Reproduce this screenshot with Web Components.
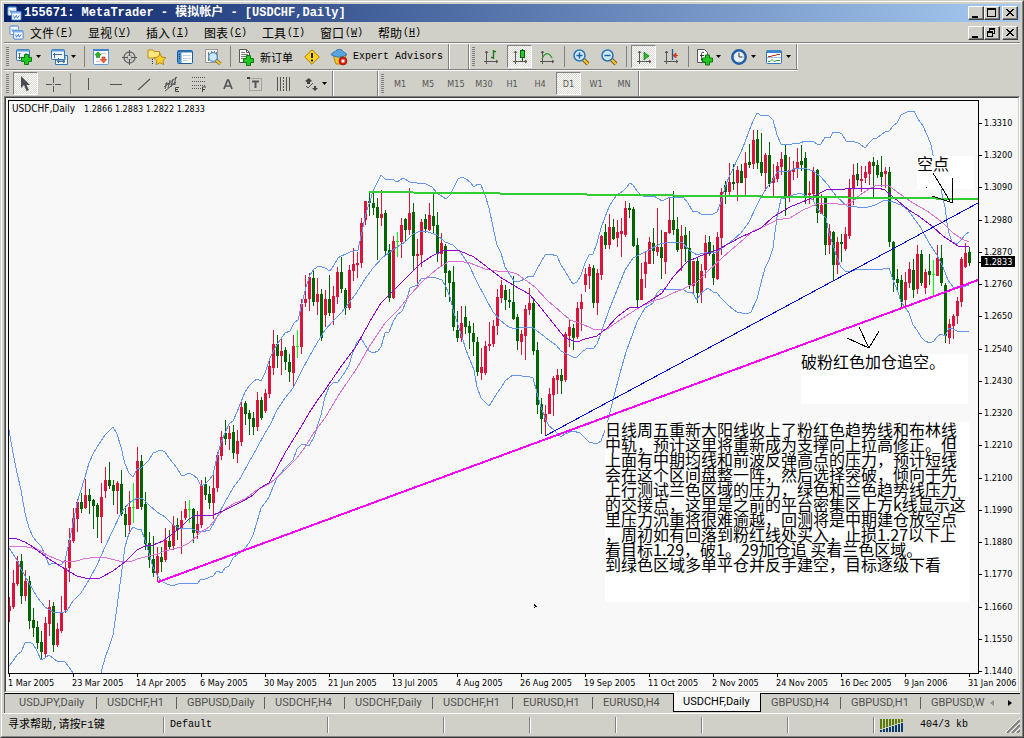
<!DOCTYPE html>
<html lang="zh-CN">
<head>
<meta charset="utf-8">
<title>MetaTrader</title>
<style>
  html, body { margin: 0; height: 100%; background: #d0d0c8; }
  body { font-family: "DejaVu Sans Condensed", "Liberation Sans", sans-serif; color: #000; }
</style>
</head>
<body>
<mt-window>
  <mt-titlebar>155671: MetaTrader - 模拟帐户 - [USDCHF,Daily]</mt-titlebar>
  <mt-menubar></mt-menubar>
  <mt-toolrow ruled>
    <mt-toolbar>
      <mt-tool icon="newchart" label="New chart" drop></mt-tool>
      <mt-tool icon="profiles" label="Profiles" drop></mt-tool>
      <mt-sep></mt-sep>
      <mt-tool icon="market" label="Market watch"></mt-tool>
      <mt-tool icon="target" label="Data window"></mt-tool>
      <mt-tool icon="navigator" label="Navigator"></mt-tool>
      <mt-tool icon="terminal" label="Terminal"></mt-tool>
      <mt-tool icon="tester" label="Strategy tester"></mt-tool>
      <mt-sep></mt-sep>
      <mt-tool icon="order" label="新订单" wide>新订单</mt-tool>
      <mt-tool icon="warn" label="MetaEditor"></mt-tool>
      <mt-tool icon="expert" label="Expert Advisors" wide latin>Expert Advisors</mt-tool>
    </mt-toolbar>
    <mt-toolbar spacer="short"></mt-toolbar>
    <mt-toolbar>
      <mt-tool icon="bars" label="Bar chart"></mt-tool>
      <mt-tool icon="candles" label="Candlesticks" pressed></mt-tool>
      <mt-tool icon="line" label="Line chart"></mt-tool>
      <mt-sep></mt-sep>
      <mt-tool icon="zoomin" label="Zoom in"></mt-tool>
      <mt-tool icon="zoomout" label="Zoom out"></mt-tool>
      <mt-sep></mt-sep>
      <mt-tool icon="scroll" label="Auto scroll" pressed></mt-tool>
      <mt-tool icon="shift" label="Chart shift"></mt-tool>
      <mt-sep></mt-sep>
      <mt-tool icon="indicator" label="Indicators" drop></mt-tool>
      <mt-tool icon="clock" label="Periods" drop></mt-tool>
      <mt-tool icon="template" label="Templates" drop></mt-tool>
    </mt-toolbar>
  </mt-toolrow>
  <mt-toolrow>
    <mt-toolbar>
      <mt-tool icon="cursor" label="Cursor" pressed></mt-tool>
      <mt-tool icon="cross" label="Crosshair"></mt-tool>
      <mt-sep></mt-sep>
      <mt-tool icon="vline" label="Vertical line"></mt-tool>
      <mt-tool icon="hline" label="Horizontal line"></mt-tool>
      <mt-tool icon="trend" label="Trendline"></mt-tool>
      <mt-tool icon="channel" label="Channel"></mt-tool>
      <mt-tool icon="fibo" label="Fibonacci"></mt-tool>
      <mt-tool icon="text" label="Text"></mt-tool>
      <mt-tool icon="label" label="Text label"></mt-tool>
      <mt-tool icon="cycles" label="Cycle lines"></mt-tool>
      <mt-tool icon="arrows" label="Arrows" drop></mt-tool>
    </mt-toolbar>
    <mt-toolbar spacer="long"></mt-toolbar>
    <mt-toolbar>
      <mt-tool label="M1">M1</mt-tool><mt-tool label="M5">M5</mt-tool><mt-tool label="M15">M15</mt-tool>
      <mt-tool label="M30">M30</mt-tool><mt-tool label="H1">H1</mt-tool><mt-tool label="H4">H4</mt-tool>
      <mt-tool label="D1" pressed>D1</mt-tool><mt-tool label="W1">W1</mt-tool><mt-tool label="MN">MN</mt-tool>
    </mt-toolbar>
  </mt-toolrow>
  <mt-chart></mt-chart>
  <mt-tabs></mt-tabs>
  <mt-status></mt-status>
</mt-window>

<script>
const define = (name, css, html, setup) => customElements.define(name, class extends HTMLElement {
  connectedCallback() {
    if (this.shadowRoot) return;
    const root = this.attachShadow({ mode: 'open' });
    root.innerHTML = `<style>:host,*{box-sizing:border-box}${css}</style>${typeof html === 'function' ? html(this) : html}`;
    if (setup) setup(root, this);
  }
});

/* ---------- icons (16 x 16) ---------- */
const plus = (x, y) => `<path d="M${x + 3} ${y}h4v3h3v4h-3v3h-4v-3h-3v-4h3z" fill="#22c822" stroke="#0a7a0a"/>`;
const axes = '<path d="M3.500 2v13M1 12.500h14M2 4l1.500-2L5 4M13 11l2 1.500-2 1.500" fill="none" stroke="#555"/>';
const lens = s => `<path d="M10 10l5 5" stroke="#8a6410" stroke-width="4"/><path d="M10 10l5 5" stroke="#f2c640" stroke-width="2"/><circle cx="6.500" cy="6.500" r="5.500" fill="#cfe8fb" stroke="#2a75b8" stroke-width="1.500"/><path d="${s}" stroke="#1d62a4" stroke-width="1.500"/>`;
const logo = '<rect x="1" y="1" width="9" height="9" rx="1" fill="#fff" stroke="#4a8ad8"/><path d="M2 1.500h7" stroke="#7fb2ee"/><path d="M3 4l1 3 1-2 1 2 2-3" fill="none" stroke="#4a8ad8"/><rect x="5" y="6" width="10" height="9" rx="1" fill="#fff" stroke="#3a78cc"/><path d="M5 7h10" stroke="#7fb2ee" stroke-width="2"/><path d="M7 10l1 3 2-3 1 3 2-3" fill="none" stroke="#3a78cc"/>';
const icons = {
  logo,
  newchart: `<rect x=".5" y=".5" width="13" height="11" rx="1" fill="#eef5fd" stroke="#2f74b5"/><path d="M1 1.500h12" stroke="#5b9bd8" stroke-width="2"/><path d="M3.500 4v6M2 8.500h9M2.500 5l1-1 1 1M10 4v4" fill="none" stroke="#49698a"/>${plus(5.5, 5.5)}`,
  profiles: '<rect x=".5" y=".5" width="13" height="10" rx="1" fill="#eef5fd" stroke="#2f74b5"/><path d="M1 1.500h12" stroke="#5b9bd8" stroke-width="2"/><path d="M3.500 4v5M2 5.500h9" stroke="#49698a"/><path d="M4.500 11v4.500h12v-9H14V11z" fill="#eef5fd" stroke="#2f74b5"/><path d="M7.500 9v5M6 12.500h8M12 11l2 1.500-2 1.500" fill="none" stroke="#49698a"/>',
  market: '<rect x=".5" y=".5" width="15" height="15" rx="1" fill="#fff" stroke="#5b9bd8"/><path d="M0 1h16" stroke="#3f86cb" stroke-width="2"/><path d="M8 4.500h5M3 12.500h4" stroke="#ccc"/><path d="M1.800 6L5 2.800 8.200 6H6.500v2.500h-3V6z" fill="#28b828" stroke="#0b7d0b" stroke-width=".6"/><path d="M7.300 10.500L10.500 14l3.200-3.500H12V8H9v2.500z" fill="#f0643c" stroke="#b22c10" stroke-width=".6"/>',
  target: '<circle cx="8.500" cy="8.500" r="5.500" fill="none" stroke="#666" stroke-width="1.300"/><circle cx="8.500" cy="8.500" r="2.500" fill="none" stroke="#999"/><path d="M8.500 1v6M8.500 10v6M1 8.500h6M10 8.500h6" stroke="#555"/>',
  navigator: '<path d="M-1 1h5l1 1.500h5.500V9H-1z" fill="#ffe680" stroke="#b98c14"/><path d="M3.500 10v6" stroke="#333" stroke-dasharray="1 1"/><path d="M11 4.500l1.700 3.500 4.300.6-3 2.900.8 4.200-3.800-2-3.900 2 .8-4.200-3-2.900 4.300-.6z" fill="#ffd028" stroke="#a97709" stroke-width=".8"/>',
  terminal: '<rect x=".5" y="1.500" width="15" height="13" rx="1" fill="#fff" stroke="#1c5c9e"/><path d="M1 2.500h14" stroke="#2f74b5" stroke-width="2"/><path d="M1 3h3.500v11H1z" fill="#4a8fd0"/><path d="M6 6.500h8M6 9.500h8M6 11.500h5" stroke="#b9d3ee"/><path d="M2.500 5v1M2.500 7v1M2.500 9v1" stroke="#12406e"/>',
  tester: '<rect x=".5" y=".5" width="12" height="13" fill="#f4f4f2" stroke="#999"/><path d="M3.500 3v9M6.500 2v4M9.500 2v3M11.500 3v4" stroke="#777"/><path d="M10.500 11l5 4" stroke="#8a6410" stroke-width="3.500"/><path d="M10.500 11l5 4" stroke="#f2c640" stroke-width="2"/><circle cx="8" cy="8" r="4.300" fill="#cfe8fb" stroke="#4f93cc" stroke-width="1.300"/>',
  order: `<path d="M1.500.5h7l3 3v10h-10z" fill="#fff" stroke="#555"/><path d="M8.500.5v3h3" fill="none" stroke="#555"/><path d="M3 3.500h4M3 5.500h7M3 7.500h7M3 9.500h4" stroke="#777"/>${plus(5.5, 6.500)}`,
  warn: '<path d="M8 .7L15.300 8 8 15.300.7 8z" fill="#ffd21e" stroke="#a87a08"/><path d="M8 4v5" stroke="#222" stroke-width="2"/><rect x="7" y="10.500" width="2" height="2" fill="#222"/>',
  expert: '<path d="M2 6l3 9h7l3-9z" fill="#f5c62c" stroke="#b08710"/><path d="M0 5.500C2 2.500 4 3.500 5 1.500 7 0 10 0 11.500 1.500 12 3.500 14 3 16 5.500 11 9 5 9 0 5.500z" fill="#58a4e0" stroke="#22689f" stroke-width=".8"/><circle cx="12" cy="12" r="4" fill="#d81c14" stroke="#8d0d08" stroke-width=".6"/><rect x="10.500" y="10.500" width="3" height="3" fill="#fff"/>',
  bars: `${axes}<path d="M10.500 1v9M8 8.500h3M10 2.500h3" stroke="#1d7a1d" stroke-width="1.400"/>`,
  candles: `${axes}<path d="M10.500 0v12" stroke="#0b5c0b"/><rect x="8.500" y="1.500" width="4" height="7" fill="#28c828" stroke="#0b5c0b"/>`,
  line: `${axes}<path d="M3 10c3-7 7-7 10-1" fill="none" stroke="#2c9a2c" stroke-width="1.300"/>`,
  zoomin: lens('M3.500 6.500h6M6.500 3.500v6'),
  zoomout: lens('M3.500 6.500h6'),
  scroll: `${axes}<path d="M8 3v8l5-4z" fill="#28b828" stroke="#0b7d0b" stroke-width=".7"/>`,
  shift: `${axes}<path d="M9.500 0v11" stroke="#1d5c8e" stroke-width="1.300"/><path d="M15 6.500h-4M13 4l-3 2.500L13 9z" fill="#c8401c" stroke="#c8401c"/>`,
  indicator: `<path d="M1.500.5h7l3 3v10h-10z" fill="#fff" stroke="#555"/><path d="M8 3.500c-3-1-2.500 1-2.500 8M4 6.500h4" fill="none" stroke="#333"/>${plus(6.5, 6)}`,
  clock: '<circle cx="8" cy="8" r="6.700" fill="#e9f2fb" stroke="#1f5fa8" stroke-width="2.500"/><path d="M8 4v4h3.500" fill="none" stroke="#333"/><path d="M8 2.500v1M8 12.500v1M2.500 8h1M12.500 8h1" stroke="#777"/>',
  template: '<rect x=".5" y="1.500" width="15" height="13" rx="1" fill="#fff" stroke="#2f74b5"/><path d="M1 2.500h14" stroke="#3f86cb" stroke-width="3"/><path d="M2 7.500h3l2-1h2l2-1h3" fill="none" stroke="#b03018"/><path d="M1 8.500h14" stroke="#9dbfe0"/><path d="M2 12.500h2l2-2 2 2 3-1 3 0" fill="none" stroke="#2c9a2c"/>',
  cursor: '<path d="M3 0v12l3-3 2.500 6 2.500-1-2.500-5H12z" fill="#4d4d4d"/>',
  cross: '<path d="M8.500 1v6M8.500 10v6M1 8.500h6M10 8.500h6M8 8.500h1" stroke="#555"/>',
  vline: '<path d="M9.500 2v12" stroke="#555"/>',
  hline: '<path d="M3 8.500h12" stroke="#555"/>',
  trend: '<path d="M3 14L15 3" stroke="#555" stroke-width="1.200"/>',
  channel: '<path d="M1 11L14 1M2 15L13 6M4 6l-2 7M7 4L5 12M10 3L8 11M13 1l-2 8M2 8h11" stroke="#555" fill="none"/><path d="M16 11.500h-3.500v4H16M12.500 13.500H15" fill="none" stroke="#444"/>',
  fibo: '<path d="M1 1.500h14M1 5.500h14M1 9.500h14M1 12.500h9" stroke="#555" stroke-dasharray="1 1"/><path d="M11.500 16v-5H15M11.500 13.500H14" fill="none" stroke="#444"/>',
  text: '<path d="M5 13L8.500 4h1L13 13M6.500 10h5" fill="none" stroke="#555" stroke-width="1.700"/>',
  label: '<rect x="2.500" y="2.500" width="12" height="12" fill="none" stroke="#777" stroke-dasharray="1 1"/><path d="M0 1h3v2H0z" fill="#444"/><path d="M5 5.500h7M8.500 5v7" stroke="#555" stroke-width="2"/>',
  cycles: '<path d="M2.500 1v14M5.500 1v14M11.500 1v14M14.500 1v14" stroke="#555"/><path d="M8.500 1v14" stroke="#555" stroke-dasharray="2 1"/>',
  arrows: '<path d="M3 5l4-3 3 3-2 1v2H5V6z" fill="#444"/><path d="M10 12h2v-2h2v2h2l-3 3z" fill="#444"/><path d="M4 10l2 2 5-5" fill="none" stroke="#555"/>'
};
const icon = (name, size = 16) => `<svg width="${size}" height="${size}" viewBox="0 0 16 16" aria-hidden="true" style="overflow:visible;flex:none">${icons[name]}</svg>`;

/* ---------- window frame ---------- */
define('mt-window', `
  :host{display:block;height:100vh;min-height:400px;border:1px solid;border-color:#d0d0c8 #404040 #404040 #d0d0c8;background:#d0d0c8}
  .in{display:flex;flex-direction:column;height:100%;border:1px solid;border-color:#fff #808080 #808080 #fff;padding:2px 2px 0 2px}`,
  '<div class="in"><slot></slot></div>');

const capCss = `
  .caps{display:flex;margin-left:auto;padding-right:2px}
  .caps button{width:16px;height:14px;padding:0;background:#d0d0c8;border:1px solid;border-color:#fff #404040 #404040 #fff;box-shadow:inset -1px -1px #808080;display:block}
  .caps button:last-child{margin-left:2px}
  .caps svg{display:block}`;
const caps = mid => `<div class="caps">
  <button aria-label="Minimize"><svg width="14" height="12" shape-rendering="crispEdges"><path d="M3 9h6v2H3z"/></svg></button>
  <button aria-label="Restore"><svg width="14" height="12" shape-rendering="crispEdges">${mid}</svg></button>
  <button aria-label="Close"><svg width="14" height="12" shape-rendering="crispEdges"><path d="M3 2h2v1h1v1h2V3h1V2h2v1h-1v1H9v1H8v1h1v1h1v1h1v1H9V8H8V7H6v1H5v1H3V8h1V7h1V6h1V5H5V4H4V3H3z"/></svg></button></div>`;

define('mt-titlebar', `
  :host{display:flex;flex:none;align-items:center;height:18px;padding-left:3px;background:linear-gradient(to right,#0a246a,#a6caf0);color:#fff;font:bold 12px/18px "Liberation Mono","Noto Sans CJK SC",monospace;white-space:pre}
  span{padding-left:2px}${capCss}`,
  `${icon('logo', 15)}<span><slot></slot></span>${caps('<path d="M2 1h9v9H2zM3 3v6h7V3z" fill-rule="evenodd"/>')}`);

define('mt-menubar', `
  :host{display:flex;flex:none;align-items:center;height:22px;padding-left:5px;border-bottom:1px solid #fff;box-shadow:inset 0 -1px #808080}
  nav{display:flex;padding-left:6px}
  nav a{display:flex;align-items:center;gap:1px;width:58px;color:#000;text-decoration:none;font:12px/18px "Noto Sans CJK SC",sans-serif;white-space:nowrap}
  small{font:10px/18px "Liberation Mono",monospace}${capCss}`,
  `${icon('logo', 15)}<nav>${[['文件', 'F'], ['显视', 'V'], ['插入', 'I'], ['图表', 'C'], ['工具', 'T'], ['窗口', 'W'], ['帮助', 'H']]
    .map(([t, k]) => `<a href="#">${t}<small>(<u>${k}</u>)</small></a>`).join('')}</nav>
  ${caps('<path d="M4 1h6v6H8v3H2V4h2zM5 3v1h3v2h1V3zM3 6v3h4V6z" fill-rule="evenodd"/>')}`);

/* ---------- toolbars ---------- */
define('mt-toolrow', `
  :host{display:flex;flex:none}
  :host([ruled]) div{border-bottom:1px solid #fff;box-shadow:inset 0 -1px #808080;padding-bottom:1px}
  div{display:flex;height:auto}`, '<div><slot></slot></div>');

define('mt-toolbar', `
  :host{display:flex;align-items:center;height:25px;border-right:1px solid #fff;box-shadow:inset -1px 0 #808080;padding-right:1px}
  :host([spacer=short]){width:20px}
  :host([spacer=long]){width:45px}
  :host([spacer]) i{display:none}
  i{width:3px;height:20px;margin:0 2px;background:repeating-linear-gradient(#808080 0 1px,#d0d0c8 1px 2px)}`,
  '<i></i><slot></slot>');

define('mt-sep', ':host{display:block;width:6px;height:21px}i{display:block;width:1px;height:21px;margin-left:3px;background:#808080}', '<i></i>');

define('mt-tool', `
  :host{display:block;height:25px}
  button{display:flex;align-items:center;justify-content:center;width:28px;height:25px;padding:0;border:0;background:none;color:#555;font:9px/12px "DejaVu Sans Condensed","Liberation Sans",sans-serif;white-space:nowrap}
  button.drop{width:35px;gap:4px}
  button.wide{width:auto;padding:0 5px;gap:6px;color:#000;font:11px/14px "Noto Sans CJK SC",sans-serif}
  button.latin{font:10px/14px "Liberation Mono",monospace}
  button.on{width:25px;height:23px;margin:1px 1px 1px 2px;border:1px solid;border-color:#808080 #fff #fff #808080;background:repeating-conic-gradient(#fff 0 25%,#d8d8d0 0 50%) 0 0/2px 2px}
  .tri{width:5px;height:3px}`,
  el => `<button class="${['drop', 'wide', 'latin'].filter(k => el.hasAttribute(k)).join(' ')}${el.hasAttribute('pressed') ? ' on' : ''}" aria-label="${el.getAttribute('label')}">${
    el.hasAttribute('icon') ? icon(el.getAttribute('icon')) : ''}<slot></slot>${
    el.hasAttribute('drop') ? '<svg class="tri" viewBox="0 0 5 3"><path d="M0 0h5L2.500 3z"/></svg>' : ''}</button>`);

/* ---------- chart ---------- */
/* One entry per day: kind (r rising, g falling, d unchanged), high, body top, body bottom, low. */
const candles = `r597,606,611,622 r570,583,607,609 r556,561,584,586 g554,561,596,604 r570,581,596,601 g576,581,621,629 g608,620,628,637 g621,627,643,649
g631,642,652,659 r617,623,654,658 r600,607,624,636 g602,606,645,652 r623,629,645,647 r596,613,631,633 r557,568,610,613 r528,540,568,582
r508,518,541,543 r499,502,519,532 g493,502,509,513 r479,495,508,509 g489,495,501,514 g499,500,506,529 g503,505,517,538 r483,497,517,543
r467,480,491,498 g462,480,486,489 g480,485,491,505 r481,483,491,514 g470,484,514,516 g506,514,525,537 r491,507,525,534 d483,507,508,523
r447,461,509,509 g455,461,507,510 g492,504,544,550 g532,543,560,568 g536,559,573,577 r547,556,573,582 g547,557,562,572 r528,540,560,562
g530,541,547,549 r516,525,546,550 g518,525,530,540 r511,520,528,554 r501,509,518,520 d500,509,510,523 g508,509,533,543 r511,524,533,539
r480,485,525,528 g477,484,495,500 g486,494,503,509 r475,488,503,519 r452,455,488,492 r431,437,456,460 g420,433,439,445 r426,433,439,450
g425,432,453,459 r430,441,454,463 r399,407,442,446 g401,403,414,425 g410,413,419,435 g412,418,427,435 r392,400,427,431 g397,400,418,420
r389,393,411,413 r359,366,394,398 r330,344,368,375 g335,344,356,368 r339,351,356,375 g347,350,362,370 g354,362,372,382 r335,346,373,387
d330,346,347,358 r299,304,347,354 r275,299,303,307 r273,277,299,311 g271,278,302,306 r278,294,302,315 g289,294,338,341 r290,299,315,327
g275,299,313,316 r286,296,313,325 r267,272,297,304 g257,272,289,293 g288,290,308,315 r265,270,308,310 r248,264,271,281 r252,263,265,278
r218,223,263,268 r201,201,220,225 g191,201,203,216 g192,203,208,215 g198,207,218,260 r190,214,218,226 g210,213,251,255 g244,250,298,302
r236,241,298,299 d232,241,242,257 r218,225,242,258 g218,219,230,241 r188,213,230,235 g203,212,256,270 r239,254,256,287 r219,222,255,267
g214,219,229,233 r203,215,230,231 g194,216,226,233 g212,225,254,262 r233,243,254,266 g244,246,273,297 g270,271,283,302 g266,282,327,331
g311,330,338,342 r306,323,338,342 g306,317,327,334 g321,326,333,349 g323,333,342,356 g337,342,372,376 r348,367,373,380 r341,346,373,375
r322,344,346,351 r320,326,344,347 r289,297,326,335 r280,285,298,303 g285,290,300,310 g289,300,302,308 g276,302,319,320 g314,317,341,350
r330,334,342,355 r305,309,336,360 r288,303,310,315 g300,303,351,355 g342,350,405,414 g398,404,419,434 r405,414,422,436 r388,394,414,414
r376,378,395,416 r369,375,380,394 g369,375,381,394 r332,334,380,382 r319,327,336,347 g324,328,338,350 r302,308,337,339 r294,302,309,331
r268,274,285,292 r264,267,276,289 g265,268,303,308 r269,273,303,315 r235,236,275,280 g224,232,245,249 r214,227,245,249 g219,227,239,240
r220,232,238,247 r218,231,234,257 r201,208,235,237 g203,208,210,218 g207,209,246,247 g238,245,300,309 r263,279,300,300 r251,262,274,288
r237,242,264,264 g228,243,251,264 r208,247,252,256 g230,247,258,279 r232,232,262,274 r197,220,233,234 g191,220,230,235 g217,229,250,252
r225,236,249,271 g227,235,249,262 g231,248,285,289 r261,261,286,293 g258,261,293,303 r264,271,293,303 r235,243,270,278 g236,242,254,256
g245,254,278,285 r232,237,279,280 r188,192,238,255 g181,185,192,204 r163,182,192,195 g164,182,184,190 r166,170,183,201 g164,171,183,183
r152,163,178,196 g144,162,165,168 r130,140,164,169 g130,139,163,169 g133,162,173,176 r153,155,173,191 g142,155,184,187 r164,178,183,197
r162,166,179,182 r152,159,167,175 g144,155,197,216 r157,170,197,202 r161,169,172,180 r148,162,169,178 g145,161,165,171 g152,158,197,204
r181,193,195,204 r167,171,194,202 g169,170,213,223 r194,205,214,214 g197,198,245,255 r224,231,245,254 g231,232,265,280 r237,242,265,274
g234,242,244,262 r227,234,249,251 r179,188,236,239 r164,175,189,205 g163,174,180,186 r166,179,181,192 r166,172,178,183 r161,162,174,185
g157,162,166,197 g160,165,175,178 g156,172,177,187 r167,171,174,188 g167,172,242,247 g241,242,280,292 g269,279,283,292 g275,280,302,307
r272,282,300,308 r262,269,283,288 g259,270,290,298 r245,254,289,294 g250,254,283,286 r269,272,288,294 g254,271,275,285 d260,274,275,295
r245,258,276,276 g245,258,283,286 g283,285,336,343 r319,324,338,344 r314,316,326,339 r297,301,316,324 r257,259,302,307 r243,253,267,268
g247,252,263,266`.split(/\s+/);

const upper = '9,430 13,453 17,473 21,490 25,513 29,528 33,537 37,542 41,546 45,555 49,565 53,563 61,565 65,560 69,543 73,523 77,503 81,490 85,477 89,463 93,454 97,447 101,441 105,435 109,431 113,427 117,434 121,447 125,464 129,473 133,477 137,469 141,468 145,464 149,460 153,453 161,450 165,452 169,458 177,468 181,475 185,475 189,473 193,475 197,478 201,486 205,484 209,480 213,475 217,457 221,443 225,433 229,424 233,421 237,412 241,402 245,392 249,386 253,382 257,379 261,381 265,373 270,358 274,350 278,343 285,333 290,331 294,323 298,320 302,303 306,287 310,275 314,269 319,266 325,268 330,271 334,265 338,258 341,256 346,254 350,252 358,250 362,232 366,213 370,201 373,191 377,183 381,175 385,179 392,179 397,182 403,178 410,182 417,183 426,184 432,187 437,193 440,195 446,199 450,195 454,187 458,179 462,177 466,179 470,182 474,187 478,184 481,185 485,195 489,208 493,227 497,245 501,253 505,267 510,275 514,281 520,281 525,279 529,276 533,277 537,269 541,262 545,255 550,254 557,256 561,265 565,271 569,278 573,284 577,282 581,275 585,263 589,255 593,254 597,243 601,228 605,217 609,207 613,200 617,195 623,191 627,187 630,183 633,185 637,191 641,195 646,197 654,196 662,201 670,197 683,197 688,203 693,212 697,211 701,214 713,214 717,212 721,202 725,187 729,177 733,169 737,160 741,152 745,142 749,131 753,121 757,113 762,116 768,115 773,120 777,135 781,144 792,144 800,143 805,141 813,141 817,144 821,144 825,137 830,138 833,132 838,132 842,134 846,141 853,141 860,144 865,148 869,143 873,139 877,138 885,132 889,131 893,126 897,123 901,115 907,112 914,111 918,119 923,126 928,137 931,145 933,155 941,189 945,207 947,223 949,233 952,242 957,244 961,240 965,235 969,232';
const middle = '9,548 17,560 21,569 29,583 37,597 45,607 53,612 61,613 67,611 73,601 81,593 89,580 97,565 105,547 113,530 121,513 129,503 137,498 143,499 149,505 157,512 165,517 173,525 181,529 189,528 201,532 210,530 217,517 225,502 233,488 241,477 249,462 257,448 265,433 270,425 277,410 285,398 293,388 301,372 309,357 317,343 325,330 333,321 341,313 349,303 357,292 365,279 373,268 383,257 389,253 397,247 405,242 413,234 421,231 428,232 437,235 445,242 453,245 461,253 469,265 477,282 485,297 493,312 501,321 509,327 515,329 523,327 532,327 540,333 550,341 556,345 561,351 567,354 573,357 577,357 583,351 588,348 594,348 597,344 601,333 609,310 617,290 625,270 633,258 641,254 649,250 660,244 670,242 683,243 689,250 697,255 707,252 717,252 725,246 733,240 741,233 749,222 757,205 765,190 773,180 777,172 789,171 797,168 807,169 813,171 820,176 828,185 837,197 847,206 857,207 865,208 875,205 885,200 893,202 901,205 908,210 913,217 921,228 929,243 937,255 943,267 948,280 953,287 962,287 969,285';
const lower = '9,666 13,661 17,655 21,652 25,643 29,642 33,644 37,651 41,660 45,658 49,655 57,661 65,662 69,667 73,673 80,690 96,690 101,673 105,658 109,647 113,635 117,607 121,577 125,547 129,533 133,527 137,529 141,529 145,540 149,553 153,567 157,575 161,581 165,583 172,586 181,583 197,584 201,579 205,579 213,576 217,571 222,573 225,568 229,566 233,558 241,552 245,548 249,543 253,535 257,522 261,508 265,503 269,497 273,487 277,478 285,468 293,460 297,449 302,444 309,446 314,437 321,415 325,397 329,387 333,383 338,382 345,372 349,365 353,352 357,342 361,338 365,345 369,351 373,353 378,351 381,347 385,333 389,332 393,322 397,315 402,311 406,302 410,288 417,285 421,279 433,277 442,280 446,287 450,297 454,313 458,325 462,337 466,350 470,360 474,370 477,387 481,398 485,402 489,406 493,400 497,393 501,388 505,381 513,375 530,377 533,378 537,393 541,407 545,418 549,426 553,429 557,433 561,437 565,434 573,431 580,433 585,438 589,442 597,444 601,441 605,430 608,420 613,400 620,373 626,352 633,333 637,322 645,308 653,303 657,293 661,289 683,289 688,293 692,292 697,300 701,293 708,288 713,292 717,293 721,298 729,306 737,312 747,314 751,312 757,299 761,283 765,268 769,260 773,248 777,217 781,199 785,198 790,196 800,193 807,196 813,200 817,208 821,213 826,218 829,233 833,245 837,258 841,267 845,271 852,271 858,269 868,269 878,270 889,268 893,280 898,292 901,302 905,307 909,313 913,325 917,330 921,337 925,341 930,343 934,341 937,337 941,334 945,336 949,328 953,329 957,331 969,331';
const violet = '9,538 17,539 25,542 33,547 41,553 49,559 57,564 65,569 77,576 89,579 100,578 113,571 125,562 137,550 145,546 153,545 163,541 172,534 181,527 189,519 197,515 213,515 223,511 233,506 245,500 253,495 260,488 269,483 277,468 285,453 293,440 301,427 309,413 317,401 325,390 340,368 357,345 369,323 381,303 392,292 407,277 420,264 432,256 445,250 452,250 460,251 474,257 487,267 500,277 513,285 529,294 537,303 553,323 565,338 577,342 585,339 597,336 607,328 617,317 629,308 640,307 650,301 662,293 673,277 687,262 700,256 717,250 730,243 741,237 757,230 761,228 773,217 790,207 807,200 820,193 828,189 845,189 860,188 878,188 885,190 893,197 909,210 920,217 933,227 943,236 952,242 958,246 969,246';
const orchid = '9,546 27,547 37,549 49,556 61,561 73,562 83,559 97,557 107,558 119,561 130,562 137,559 145,557 157,554 165,551 181,547 189,543 197,536 201,532 209,527 217,517 225,509 233,504 245,499 257,490 269,484 281,474 297,458 305,447 313,434 325,418 340,393 357,368 369,347 385,323 398,310 410,295 423,281 437,269 448,262 458,261 470,263 485,269 497,271 507,271 517,274 535,287 547,300 570,320 580,323 593,329 607,329 623,318 640,307 653,301 663,298 673,293 683,289 697,282 707,272 723,257 737,245 753,231 763,227 777,220 790,218 803,210 817,204 830,203 845,205 852,202 860,195 869,189 877,185 888,185 897,192 913,203 927,211 942,222 953,233 962,239 969,242';

const tone = { r: '#dc143c', g: '#006400', d: '#00ff00' };
const drawCandle = (s, i) => {
  const [hi, top, bot, lo] = s.slice(1).split(',').map(Number), x = 9 + 4 * i;
  return `<path fill="${tone[s[0]]}" d="M${x} ${hi}h1V${lo}h-1zM${i ? x - 1 : x} ${top}h${i ? 3 : 2}V${bot}h${i ? -3 : -2}z"/>`;
};
const curve = (pts, color) => `<polyline points="${pts}" stroke="${color}"/>`;
const prices = Array.from({ length: 18 }, (_, i) => {
  const y = Math.round(123 + i * 548 / 17);
  return `<path d="M979 ${y}h3v1h-3z"/><text x="984" y="${y + 3}">${((13310 - 110 * i) / 10000).toFixed(4)}</text>`;
}).join('');
const dates = ['1 Mar 2005', '23 Mar 2005', '14 Apr 2005', '6 May 2005', '30 May 2005', '21 Jun 2005', '13 Jul 2005', '4 Aug 2005', '26 Aug 2005', '19 Sep 2005', '11 Oct 2005', '2 Nov 2005', '24 Nov 2005', '16 Dec 2005', '9 Jan 2006', '31 Jan 2006']
  .map((d, i) => `<path d="M${9 + 64 * i} 674h1v3h-1z"/><text x="${8 + 64 * i}" y="686">${d}</text>`).join('');
const note = (x, y, w, h, lines) => `<foreignObject x="${x}" y="${y}" width="${w}" height="${h}"><p class="note">${lines.join('\n')}</p></foreignObject>`;

define('mt-chart', `
  :host{display:block;flex:1;min-height:0;border:1px solid;border-color:#808080 #fff #fff #808080;background:#f8f8f8}
  .in{height:100%;border:1px solid;border-color:#404040 #d0d0c8 #d0d0c8 #404040}
  svg{display:block;width:100%;height:100%}
  text{font:9px "DejaVu Sans Condensed","Liberation Sans",sans-serif}
  text.name{font-size:10px}
  foreignObject{overflow:visible}
  .note{height:100%;margin:0;background:#fff;font:16px/15px "Noto Sans CJK SC",sans-serif;white-space:pre}`,
  `<div class="in"><svg viewBox="6 98 1012 593" preserveAspectRatio="xMinYMin meet">
    <clipPath id="plot"><rect x="9" y="101" width="969" height="572"/></clipPath>
    <g clip-path="url(#plot)" shape-rendering="crispEdges">
      ${candles.map(drawCandle).join('')}
      <g fill="none" stroke-width="1">
        ${curve(upper, '#6495ed')}${curve(middle, '#6495ed')}${curve(lower, '#6495ed')}${curve(orchid, '#da70d6')}${curve(violet, '#9400d3')}
        <path d="M545 436L978 203" stroke="#0000e0"/>
        <path d="M158 582L978 280" stroke="#ff00ff" stroke-width="2"/>
        <path d="M369 192L978 199" stroke="#32cd32" stroke-width="2"/>
      </g>
    </g>
    <g shape-rendering="crispEdges">
      <path d="M8 100h971v574H8zM9 101v572h969V101z" fill-rule="evenodd"/>
      ${prices}${dates}
      <path d="M979 262h2v1h-2zM981 256h34v11h-34z"/><text x="984" y="265" fill="#fff">1.2833</text>
    </g>
    <text class="name" x="12" y="112">USDCHF,Daily</text><text x="84" y="112">1.2866 1.2883 1.2822 1.2833</text>
    ${note(917, 156, 57, 33, ['空点'])}
    ${note(801, 354, 167, 50, ['破粉红色加仓追空。'])}
    ${note(605, 422, 364, 180, [
      '日线周五重新大阳线收上了粉红色趋势线和布林线',
      '中轨，预计这里将重新成为支撑向上拉高修正。但',
      '上面有中期均线和前波反弹高点的压力，预计短线',
      '会在这个区间盘整一阵，然后选择突破，倾向于先',
      '上行测试兰色区域的压力，绿色和兰色趋势线压力',
      '的交接点，这里是之前的平台密集区上方k线显示这',
      '里压力沉重将很难逾越，回测将是中期建仓放空点',
      '，周初如有回落到粉红线处买入，止损1.27以下上',
      '看目标1.29，破1。29加仓追 买看兰色区域。',
      '到绿色区域多单平仓并反手建空，目标逐级下看'])}
    <g fill="none" stroke="#000" shape-rendering="crispEdges">
      <path d="M933 173L950 201M932 196L953 203M952 178L953 203M926 187h1M859 327L869 348L879 331M847 338L869 348"/>
      <path d="M534 604h1M534 605h2M535 606h2M534 607h1"/>
    </g>
  </svg></div>`);

/* ---------- chart tabs ---------- */
define('mt-tabs', `
  :host{display:flex;flex:none;height:20px;padding-left:4px;border-left:1px solid #606060;box-shadow:inset 0 1px #000}
  .list{display:flex;flex:1;min-width:0;overflow:hidden}
  button{flex:none;width:80px;height:20px;padding:0 0 0 10px;border:0;background:none;color:#505050;font:11px/18px Roboto,"Liberation Sans",sans-serif;display:flex;align-items:center;white-space:nowrap}
  button.day{width:88px}
  button.line{background:linear-gradient(#606060,#606060) right 0 center/1px 12px no-repeat}
  button.on{background:#f8f8f8;color:#000;border:1px solid #000;border-top:0;height:19px;padding-left:9px}
  .move{display:flex;width:34px;justify-content:space-between;align-items:center;padding-right:5px}
  .move button{width:11px;height:18px;padding:0;justify-content:center}`,
  () => {
    const names = ['USDJPY,Daily', 'USDCHF,H1', 'GBPUSD,Daily', 'USDCHF,H4', 'USDCHF,Daily', 'USDCHF,H1', 'EURUSD,H1', 'EURUSD,H4', 'USDCHF,Daily', 'GBPUSD,H4', 'GBPUSD,H1', 'GBPUSD,W'];
    return `<div class="list" role="tablist">${names.map((n, i) => `<button role="tab" class="${n.endsWith('Daily') ? 'day ' : ''}${i === 8 ? 'on' : i === 7 || i === 11 ? '' : 'line'}">${n}</button>`).join('')}</div>
    <div class="move"><button aria-label="Scroll left"><svg width="4" height="6"><path d="M4 0v6L0 3z" fill="#909090"/></svg></button>
    <button aria-label="Scroll right"><svg width="4" height="6"><path d="M0 0v6l4-3z"/></svg></button></div>`;
  });

/* ---------- status bar ---------- */
define('mt-status', `
  :host{display:grid;flex:none;grid-template-columns:161fr 164fr 116fr repeat(5,86fr) 145fr;height:23px;border-top:1px solid #fff;align-items:center;font:10px/16px "Liberation Mono","Noto Sans CJK SC",monospace}
  div{min-width:0;height:16px;padding-left:5px;border-right:1px solid #fff;box-shadow:inset -1px 0 #808080;white-space:nowrap}
  div.help{padding-left:4px;font:11px/16px "Liberation Mono","Noto Sans CJK SC",monospace}
  div.net{display:flex;align-items:center;border:0;box-shadow:none;gap:16px}
  .grip{margin-left:auto;align-self:flex-end}`,
  () => `<div class="help">寻求帮助,请按F1键</div><div>Default</div><div></div><div></div><div></div><div></div><div></div><div></div>
  <div class="net"><svg width="24" height="13" shape-rendering="crispEdges">${Array.from({ length: 8 }, (_, i) =>
    `<path d="M${i * 3} 0h2v${10 - i}h-2z" fill="#5c7c00"/><path d="M${i * 3} ${11 - i}h2V13h-2z" fill="#0a3c6c"/>`).join('')}</svg><span>404/3 kb</span>
  <svg class="grip" width="16" height="16"><path d="M1 16L16 1M6 16L16 6M11 16l5-5" stroke="#fff"/><path d="M3 16L16 3M8 16l8-8M13 16l3-3" stroke="#808080" stroke-width="2"/></svg></div>`);
</script>
</body>
</html>
